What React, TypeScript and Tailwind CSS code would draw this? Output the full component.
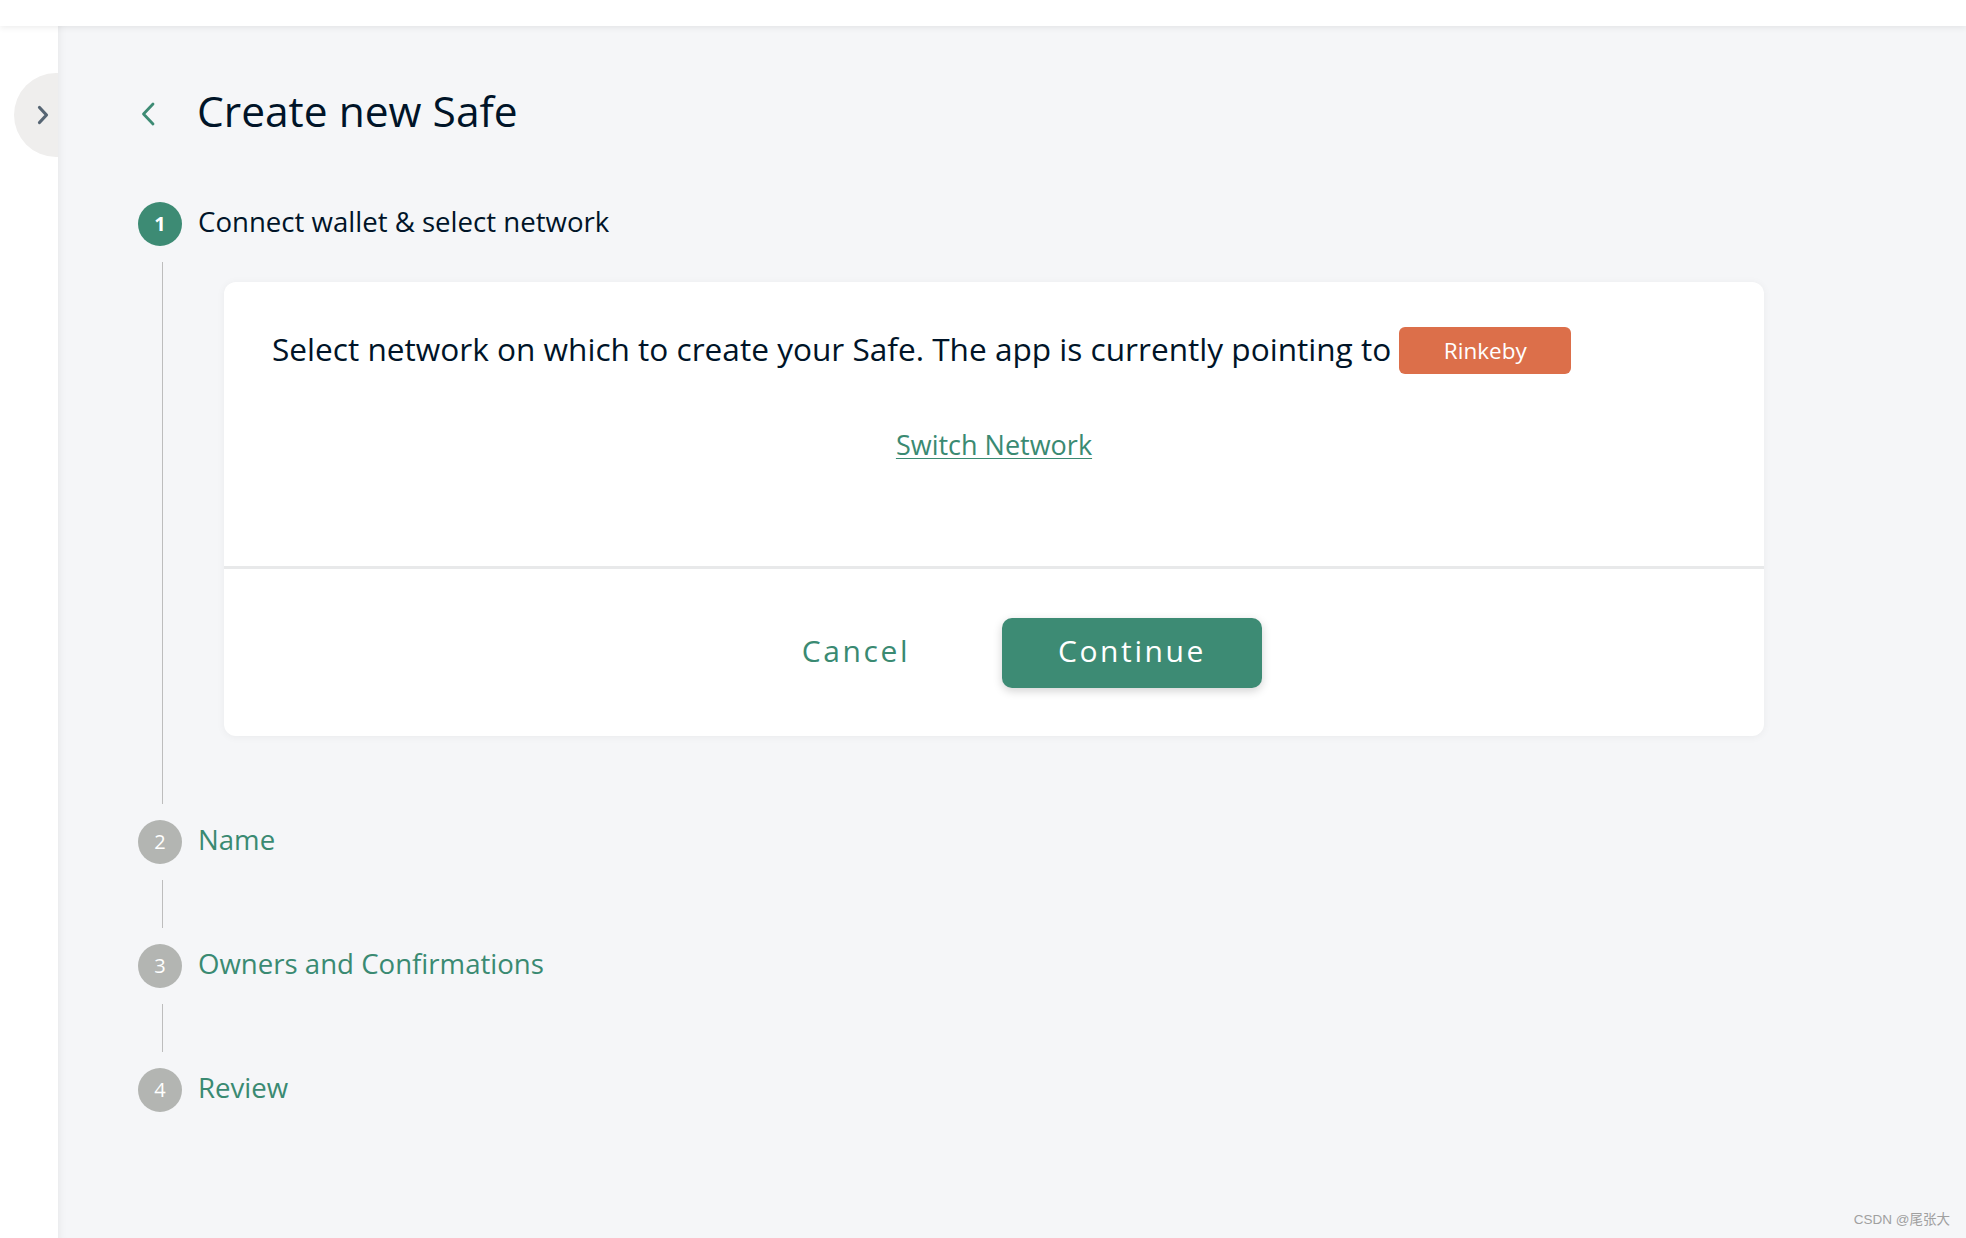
import React from 'react';

type Step = { n: number; label: string };

const steps: Step[] = [
  { n: 1, label: 'Connect wallet & select network' },
  { n: 2, label: 'Name' },
  { n: 3, label: 'Owners and Confirmations' },
  { n: 4, label: 'Review' },
];

function StepHeader({ step, active }: { step: Step; active: boolean }) {
  return (
    <div className="flex h-[44px] items-center">
      <div
        className={
          active
            ? 'flex h-[44px] w-[44px] shrink-0 items-center justify-center rounded-full bg-[#3d8b74] text-[20px] font-bold text-white'
            : 'flex h-[44px] w-[44px] shrink-0 items-center justify-center rounded-full bg-[#b3b5b2] text-[20px] text-white'
        }
      >
        {step.n}
      </div>
      <span
        className={
          active
            ? 'mb-[5px] ml-4 text-[27.6px] text-[#001428]'
            : 'mb-[5px] ml-4 text-[27.6px] text-[#3a8a72]'
        }
      >
        {step.label}
      </span>
    </div>
  );
}

function Connector({ className = '' }: { className?: string }) {
  return (
    <div className={'w-[44px] shrink-0 py-4 ' + className}>
      <div className="ml-[24px] h-full w-px bg-[#bdbdbd]" />
    </div>
  );
}

function NetworkCard() {
  return (
    <div className="ml-[42px] mt-[36px] mb-[84px] w-[1540px] rounded-[12px] bg-white shadow-[0_1px_8px_rgba(0,0,0,0.05)]">
      <div className="h-[284px] px-[48px] pt-[45px]">
        <div className="flex h-[47px] items-center text-[31.6px] text-[#001428]">
          <span className="mb-[4px]">
            Select network on which to create your Safe. The app is currently pointing to
          </span>
          <span className="ml-2 flex h-[47px] w-[172px] items-center justify-center rounded-[6px] bg-[#dc6f4a] text-[22.5px] text-white">
            Rinkeby
          </span>
        </div>
        <div className="mt-[52px] text-center leading-[37px]">
          <a href="#" className="text-[27px] text-[#3a8a72] underline decoration-1 underline-offset-[3px]">
            Switch Network
          </a>
        </div>
      </div>
      <div className="h-[3px] bg-[#e8e9ea]" />
      <div className="flex h-[167px] items-center justify-center gap-4">
        <button className="h-[70px] w-[260px] pb-[5px] text-[30px] tracking-[2.6px] text-[#3a8a72]">Cancel</button>
        <button className="h-[70px] w-[260px] rounded-[10px] bg-[#3d8b74] pb-[5px] text-[30px] tracking-[2.6px] text-white shadow-[0_3px_10px_rgba(0,0,0,0.18)]">
          Continue
        </button>
      </div>
    </div>
  );
}

export default function App() {
  return (
    <div className="relative flex h-screen w-full flex-col overflow-hidden bg-[#f5f6f8] font-['Open_Sans',sans-serif] text-[#001428]">
      <header className="relative z-20 h-[26px] shrink-0 bg-white shadow-[0_2px_6px_rgba(0,0,0,0.07)]" />
      <div className="flex min-h-0 flex-1">
        {/* sidebar with collapse toggle */}
        <aside className="relative w-[58px] shrink-0 overflow-hidden bg-white">
          <button className="absolute left-[14px] top-[47px] flex h-[84px] w-[84px] items-center rounded-full bg-[#efeeed] pl-[23px]">
            <svg width="12" height="20" viewBox="0 0 12 20" fill="none">
              <path d="M2.5 2.5 9.5 10l-7 7.5" stroke="#566573" strokeWidth="3.2" strokeLinecap="round" strokeLinejoin="round" />
            </svg>
          </button>
        </aside>

        <main className="relative z-10 flex-1 bg-[#f5f6f8] pl-[80px] shadow-[inset_8px_0_10px_-8px_rgba(0,0,0,0.08)]">
          {/* title */}
          <div className="mt-[56px] flex h-[64px] items-center">
            <svg className="ml-[3px]" width="14" height="24" viewBox="0 0 14 24" fill="none">
              <path d="M12 2 2.5 12 12 22" stroke="#3d8b74" strokeWidth="2.8" strokeLinecap="round" strokeLinejoin="round" />
            </svg>
            <h1 className="mb-[6px] ml-[42px] text-[42.5px] text-[#001428]">Create new Safe</h1>
          </div>

          {/* stepper */}
          <div className="mt-[56px] flex flex-col">
            <StepHeader step={steps[0]} active />
            <div className="flex">
              <Connector />
              <NetworkCard />
            </div>
            <StepHeader step={steps[1]} active={false} />
            <Connector className="h-[80px]" />
            <StepHeader step={steps[2]} active={false} />
            <Connector className="h-[80px]" />
            <StepHeader step={steps[3]} active={false} />
          </div>
        </main>
      </div>

      <div className="absolute bottom-[8px] right-[16px] z-30 font-['Liberation_Sans','Noto_Sans_CJK_SC',sans-serif] text-[13.5px] text-[#a0a0a0]">
        CSDN @尾张大
      </div>
    </div>
  );
}
